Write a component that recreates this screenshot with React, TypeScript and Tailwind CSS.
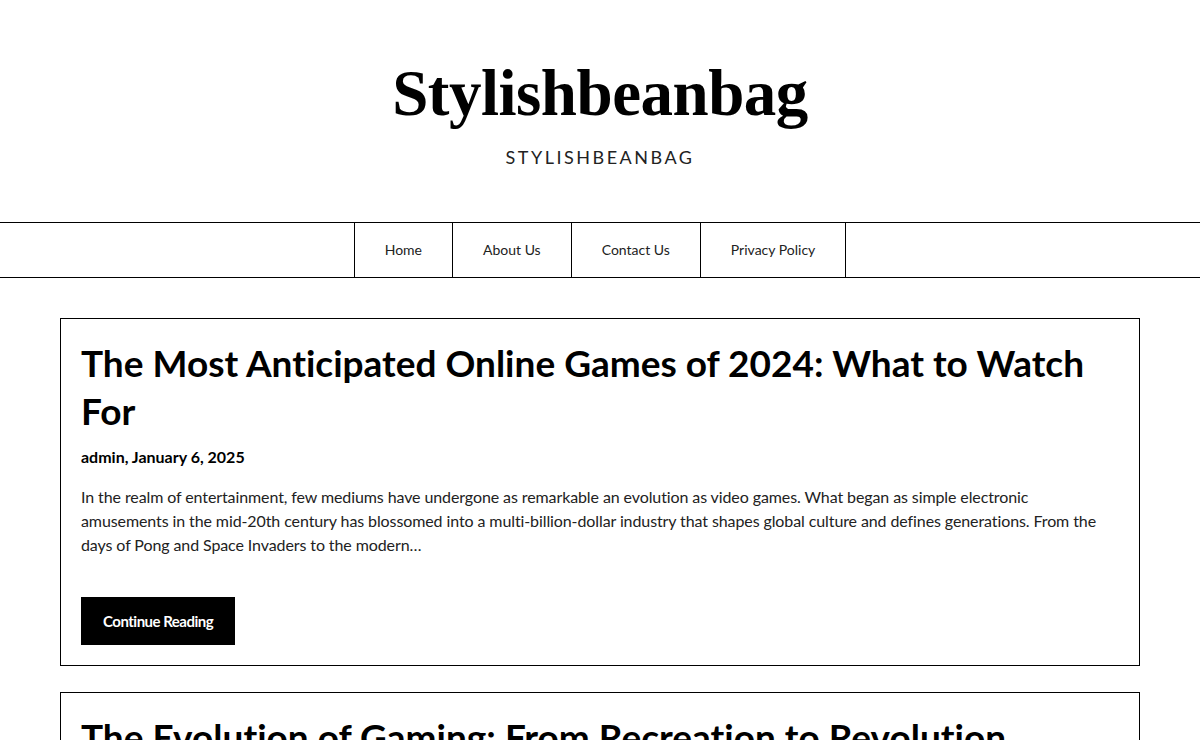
export default function App() {
  const navItems = ['Home', 'About Us', 'Contact Us', 'Privacy Policy'];

  return (
    <div className="min-h-screen bg-white text-black font-['Lato',sans-serif] [font-variant-ligatures:none]">
      {/* header */}
      <header className="pt-[50px] text-center">
        <h1 className="font-['Liberation_Serif',serif] font-bold text-[65px] leading-[86px] tracking-[-0.5px]">
          Stylishbeanbag
        </h1>
        <p className="mt-[8px] text-[18px] leading-[26px] tracking-[2.5px] text-[#222]">STYLISHBEANBAG</p>
      </header>

      <nav className="mt-[52px] border-y border-black">
        <ul className="flex justify-center">
          {navItems.map((item, i) => (
            <li
              key={item}
              className={`border-l border-black ${i === navItems.length - 1 ? 'border-r' : ''}`}
            >
              <a href="#" className="block px-[30px] leading-[54px] text-[14px] text-[#222]">
                {item}
              </a>
            </li>
          ))}
        </ul>
      </nav>

      <main className="px-[60px] pt-[40px] flex flex-col gap-[26px]">
        <article className="border border-black p-5">
          <h2 className="text-[37px] leading-[48px] font-bold text-black">
            The Most Anticipated Online Games of 2024: What to Watch For
          </h2>
          <div className="mt-[10px] text-[16px] leading-[24px] font-bold">admin, January 6, 2025</div>
          <p className="mt-[16px] text-[16px] leading-[24px] tracking-[-0.1px] text-[#222]">
            In the realm of entertainment, few mediums have undergone as remarkable an evolution as video games. What
            began as simple electronic amusements in the mid-20th century has blossomed into a multi-billion-dollar
            industry that shapes global culture and defines generations. From the days of Pong and Space Invaders to
            the modern…
          </p>
          <a
            href="#"
            className="mt-[40px] inline-block bg-black text-white text-[15px] font-bold tracking-[-0.5px] leading-[48px] px-[22px]"
          >
            Continue Reading
          </a>
        </article>

        <article className="border border-black p-5">
          <h2 className="text-[37px] leading-[48px] font-bold text-black">
            The Evolution of Gaming: From Recreation to Revolution
          </h2>
        </article>
      </main>
    </div>
  );
}
